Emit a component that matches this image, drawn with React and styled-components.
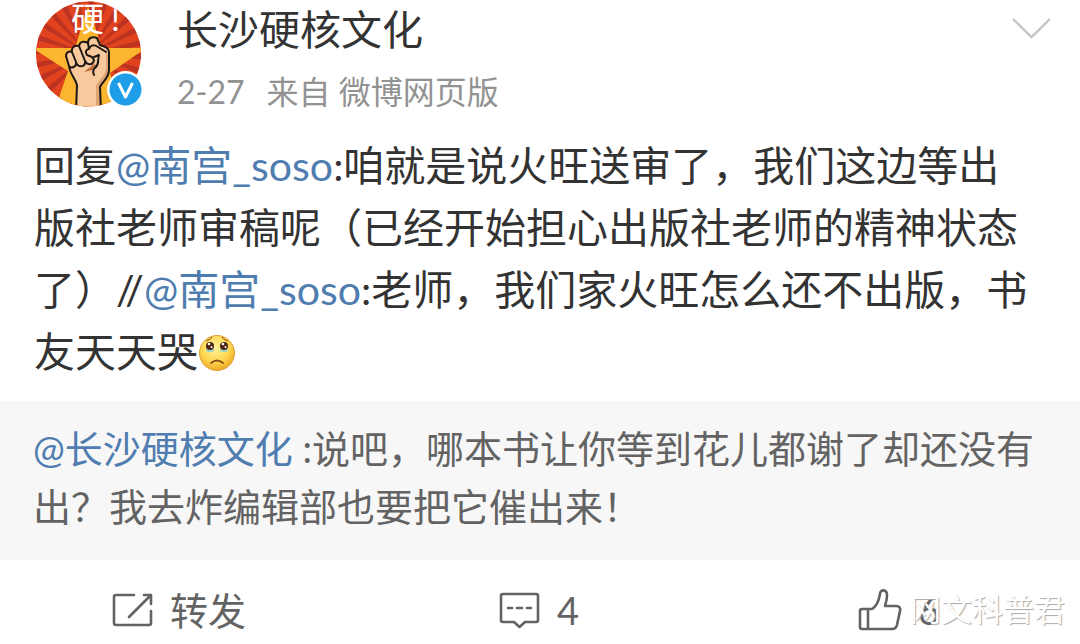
import React from "react";
import styled, { createGlobalStyle, css } from "styled-components";

const Global = createGlobalStyle`
  * { box-sizing: border-box; }
  body {
    margin: 0;
    background: #fff;
    color: #333;
    font-family: Lato, "Noto Sans CJK SC", sans-serif;
    text-spacing-trim: space-all;
  }
`;

const Post = styled.article`
  display: flex;
  flex-direction: column;
`;

const Header = styled.header`
  display: flex;
  align-items: flex-start;
  padding: 0 28px 0 34px;
`;

const AvatarLink = styled.a`
  display: block;
  flex: none;
  width: 112px;
  height: 110px;
  margin-right: 31px;
`;

const Author = styled.div`
  flex: 1;
  min-width: 0;
`;

const Name = styled.h1`
  margin: 0;
  font-size: 41px;
  font-weight: 400;
  line-height: 60px;
`;

const Meta = styled.p`
  display: flex;
  gap: 22px;
  margin: 0;
  color: #929292;
  font-size: 32px;
  line-height: 64px;
`;

const plainButton = css`
  padding: 0;
  border: 0;
  background: none;
  color: inherit;
  font: inherit;
  cursor: pointer;
`;

const MenuButton = styled.button`
  ${plainButton}
  display: flex;
  margin-top: 16px;
`;

const Body = styled.p`
  margin: 0;
  padding: 11px 40px 18px 34px;
  font-size: 41px;
  line-height: 62px;
`;

const Mention = styled.a`
  color: #507daf;
  text-decoration: none;
`;

const Emoji = styled.svg`
  display: inline-block;
  width: 38px;
  height: 38px;
  vertical-align: -5px;
`;

const Quote = styled.blockquote`
  margin: 0;
  padding: 18px 40px 25px 33px;
  background: #f7f7f7;
  color: #636363;
  font-size: 38px;
  line-height: 58px;
`;

const Actions = styled.footer`
  position: relative;
  display: grid;
  grid-template-columns: repeat(3, 1fr);
  height: 84px;
`;

const Action = styled.button`
  ${plainButton}
  display: flex;
  align-items: center;
  justify-content: center;
  gap: 16px;
  padding: 15px 2px 0 0;
  color: #636363;
  font-size: 38px;
  line-height: 58px;
`;

const Watermark = styled.span`
  position: absolute;
  right: 15px;
  bottom: 11px;
  color: #fff;
  font-size: 31px;
  line-height: 48px;
  text-shadow: 1px 1px 1px #aaa;
  pointer-events: none;
`;

const rays = Array.from({ length: 24 }, (_, i) => {
  const a = (i * 15 * Math.PI) / 180;
  const b = a + (6 * Math.PI) / 180;
  const p = (t) => `${54.5 + 80 * Math.cos(t)},${54 + 80 * Math.sin(t)}`;
  return `M54.5,54 L${p(a)} L${p(b)}Z`;
}).join(" ");

function Avatar() {
  return (
    <svg width="112" height="110" viewBox="0 0 112 110" role="img" aria-label="长沙硬核文化">
      <defs>
        <clipPath id="avatar-clip">
          <circle cx="54.5" cy="54" r="52.5" />
        </clipPath>
      </defs>
      <g clipPath="url(#avatar-clip)">
        <rect width="112" height="110" fill="#e2431f" />
        <path d={rays} fill="#bd3322" />
        <path d="M54 6 L68 48 H112 L76 73 L88 112 H20 L34 71 L-2 48 H41Z" fill="#fcb52f" />
        <text x="37 77" y="31" fontSize="33" fill="#fff">硬!</text>
        <path
          d="M42 112 L43 85 C41 78 36 74 35 66 L32 56 C32 52 35 51 38 52 C37 47 41 45 45 46 C46 41 50 41 54 43 C54 38 58 36 63 38 L66 45 C70 46 75 48 75 52 V70 C75 78 69 81 66 87 L67 112Z"
          fill="#f8c99c"
        />
        <path d="M60 64 L50 72 L59 70 L63 66Z" fill="#bd7147" />
        <path d="M62 112 V86 C65 79 71 77 72 68 V53 L75 54 V70 C75 78 69 81 66 87 L67 112Z" fill="#dfa473" />
        <path
          d="M42 112 L43 85 C41 78 36 74 35 66 L32 56 C32 52 35 51 38 52 L42 62 C43 67 37 69 35 66 M38 52 C37 47 41 45 45 46 L51 61 C52 67 45 68 42 63 M45 46 C46 41 50 41 54 43 L55 49 C52 49 51 52 53 55 L58 57 L60 60 C59 66 53 65 51 61 M54 43 C54 38 58 36 63 38 L66 45 C70 46 75 48 75 52 V70 C75 78 69 81 66 87 L67 112 M55 49 C57 44 61 45 64 47 L72 52 M60 57 L65 55 C63 61 66 64 61 68 Q58 70 60 75"
          fill="none"
          stroke="#1d1715"
          strokeWidth="2"
          strokeLinecap="round"
          strokeLinejoin="round"
        />
      </g>
      <circle cx="91.5" cy="89.5" r="18.5" fill="#fff" />
      <circle cx="91.5" cy="89.5" r="16" fill="#1e9de8" />
      <path d="M84.5 83 L91.5 97 L98.5 83" fill="none" stroke="#fff" strokeWidth="3" strokeLinejoin="round" />
    </svg>
  );
}

function SadFace() {
  return (
    <Emoji viewBox="0 0 38 38" role="img" aria-label="悲伤">
      <defs>
        <radialGradient id="face" cx="45%" cy="35%" r="65%">
          <stop offset="0" stopColor="#fff09a" />
          <stop offset="0.6" stopColor="#fed853" />
          <stop offset="1" stopColor="#efaa25" />
        </radialGradient>
      </defs>
      <circle cx="19" cy="19" r="17.5" fill="url(#face)" stroke="#dda136" />
      <ellipse cx="12" cy="16" rx="4" ry="2" fill="#9cd6c4" />
      <ellipse cx="26" cy="16" rx="4" ry="2" fill="#9cd6c4" />
      <circle cx="12" cy="12" r="4" fill="#4b2413" />
      <circle cx="26" cy="12" r="4" fill="#4b2413" />
      <circle cx="11" cy="10" r="1.3" fill="#fff" />
      <circle cx="13.5" cy="13" r="1" fill="#fff" />
      <circle cx="25" cy="10" r="1.3" fill="#fff" />
      <circle cx="27.5" cy="13" r="1" fill="#fff" />
      <path d="M8 7 Q12 6 14 3 M24 3 Q26 6 30 7" fill="none" stroke="#a7661c" strokeWidth="1.2" />
      <path d="M13 29 Q19 24 25 29" fill="none" stroke="#8f4c18" strokeWidth="1.8" strokeLinecap="round" />
    </Emoji>
  );
}

const lineIcon = {
  fill: "none",
  stroke: "currentColor",
  strokeWidth: 2.6,
  strokeLinecap: "round",
  strokeLinejoin: "round",
  "aria-hidden": true,
};

function RepostIcon() {
  return (
    <svg width="42" height="36" viewBox="0 0 42 36" {...lineIcon}>
      <path d="M22 3 H4 Q2 3 2 5 V31 Q2 33 4 33 H37 Q39 33 39 31 V19 M17 25 L38 4 M32 3 H39 V12" />
    </svg>
  );
}

function CommentIcon() {
  return (
    <svg width="42" height="38" viewBox="0 0 42 38" {...lineIcon}>
      <path d="M4 3 H37 Q39 3 39 5 V29 Q39 31 37 31 H26 L20.5 36 L15 31 H4 Q2 31 2 29 V5 Q2 3 4 3Z M9 17 H13 M18 17 H23 M28 17 H32" />
    </svg>
  );
}

function LikeIcon() {
  return (
    <svg width="44" height="44" viewBox="0 0 44 44" {...lineIcon}>
      <path d="M4 21 H14 C19 18 21 12 22 6 C22 1 29 1 29 7 C29 11 28 15 27 18 H38 Q43 18 42 23 L39 37 Q38 41 34 41 H4 Q2 41 2 39 V23 Q2 21 4 21Z M10 21 V41" />
    </svg>
  );
}

export default function App() {
  return (
    <>
      <Global />
      <Post>
        <Header>
          <AvatarLink href="#author">
            <Avatar />
          </AvatarLink>
          <Author>
            <Name>长沙硬核文化</Name>
            <Meta>
              <time>2-27</time>
              <span>来自 微博网页版</span>
            </Meta>
          </Author>
          <MenuButton type="button" aria-label="更多">
            <svg width="40" height="24" viewBox="0 0 40 24" fill="none" stroke="#c4c4c4" strokeWidth="2.4" aria-hidden="true">
              <path d="M1 3 L19.5 21 L38 3" />
            </svg>
          </MenuButton>
        </Header>
        <Body>
          回复<Mention href="#soso">@南宫_soso</Mention>:咱就是说火旺送审了，我们这边等出版社老师审稿呢（已经开始担心出版社老师的精神状态了）//<Mention href="#soso">@南宫_soso</Mention>:老师，我们家火旺怎么还不出版，书友天天哭<SadFace />
        </Body>
        <Quote>
          <Mention href="#author">@长沙硬核文化</Mention> :说吧，哪本书让你等到花儿都谢了却还没有出？我去炸编辑部也要把它催出来！
        </Quote>
        <Actions>
          <Action type="button"><RepostIcon />转发</Action>
          <Action type="button"><CommentIcon />4</Action>
          <Action type="button"><LikeIcon />6</Action>
          <Watermark>网文科普君</Watermark>
        </Actions>
      </Post>
    </>
  );
}
